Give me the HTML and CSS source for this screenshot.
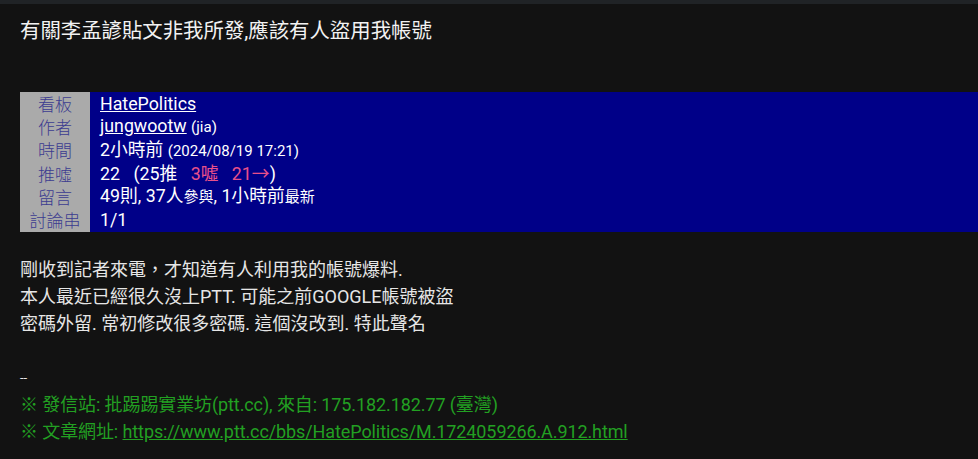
FILE: index.html
```html
<!DOCTYPE html>
<html lang="zh-Hant">
<head>
  <meta charset="UTF-8" />
  <meta name="viewport" content="width=device-width, initial-scale=1.0"/>
  <title>有關李孟諺貼文非我所發,應該有人盜用我帳號</title>
  <link rel="stylesheet" href="styles.css">
</head>
<body>
  <div class="topbar"></div>

  <div class="article">
    <h1 class="title">有關李孟諺貼文非我所發,應該有人盜用我帳號</h1>

    <table class="meta">
      <tr><th>看板</th><td><a href="#">HatePolitics</a></td></tr>
      <tr><th>作者</th><td><a href="#">jungwootw</a> <small>(jia)</small></td></tr>
      <tr><th>時間</th><td>2小時前 <small>(2024/08/19 17:21)</small></td></tr>
      <tr><th>推噓</th><td>22 <span class="gap"></span>(25推 <span class="gap"></span><span class="boo">3噓 <span class="gap"></span>21→</span>)</td></tr>
      <tr><th>留言</th><td>49則, 37人<small>參與</small>, 1小時前<small>最新</small></td></tr>
      <tr><th>討論串</th><td>1/1</td></tr>
    </table>

    <div class="content">
      <p>剛收到記者來電，才知道有人利用我的帳號爆料.</p>
      <p>本人最近已經很久沒上PTT. 可能之前GOOGLE帳號被盜</p>
      <p>密碼外留. 常初修改很多密碼. 這個沒改到. 特此聲名</p>
    </div>

    <div class="sign">
      <p class="dash">--</p>
      <p class="green">※ 發信站: 批踢踢實業坊(ptt.cc), 來自: 175.182.182.77 (臺灣)</p>
      <p class="green">※ 文章網址: <a href="#">https://www.ptt.cc/bbs/HatePolitics/M.1724059266.A.912.html</a></p>
    </div>
  </div>
</body>
</html>
```

FILE: styles.css
```css
body {
  margin: 0;
  background: #121212;
  color: #e6e6e6;
  font-family: Roboto, "Noto Sans CJK TC", sans-serif;
  font-size: 18px;
  overflow: hidden;
}
.topbar {
  height: 4px;
  background: #202326;
}
.article {
  padding-left: 20px;
}
.title {
  margin: 0;
  padding-top: 15px;
  font-size: 20.4px;
  font-weight: normal;
  line-height: 24px;
  color: #f2f2f2;
}
.meta {
  margin-top: 49px;
  width: 100%;
  border-collapse: collapse;
  background: #000088;
}
.meta tr {
  height: 23.3px;
}
.meta th,
.meta td {
  height: 23.3px;
  line-height: 20px;
  padding: 0;
  vertical-align: middle;
}
.meta th {
  width: 70px;
  background: #aaaaaa;
  color: #3c3c90;
  font-weight: 300;
  font-size: 17px;
  text-align: center;
  font-family: "Noto Sans CJK TC", sans-serif;
}
.meta td {
  padding-left: 10px;
  color: #ffffff;
  font-size: 17.8px;
  font-weight: normal;
}
.meta a {
  color: #ffffff;
  text-decoration: underline;
}
.meta small {
  font-size: 15px;
}
.gap {
  display: inline-block;
  width: 9px;
}
.boo {
  color: #e8508a;
}
.content {
  margin-top: 24px;
}
.content p,
.sign p {
  margin: 0;
  line-height: 27px;
}
.sign {
  margin-top: 27px;
}
.dash {
  font-size: 13px;
}
.green {
  color: #22a022;
  letter-spacing: -0.1px;
}
.green a {
  color: #22a022;
}
```
